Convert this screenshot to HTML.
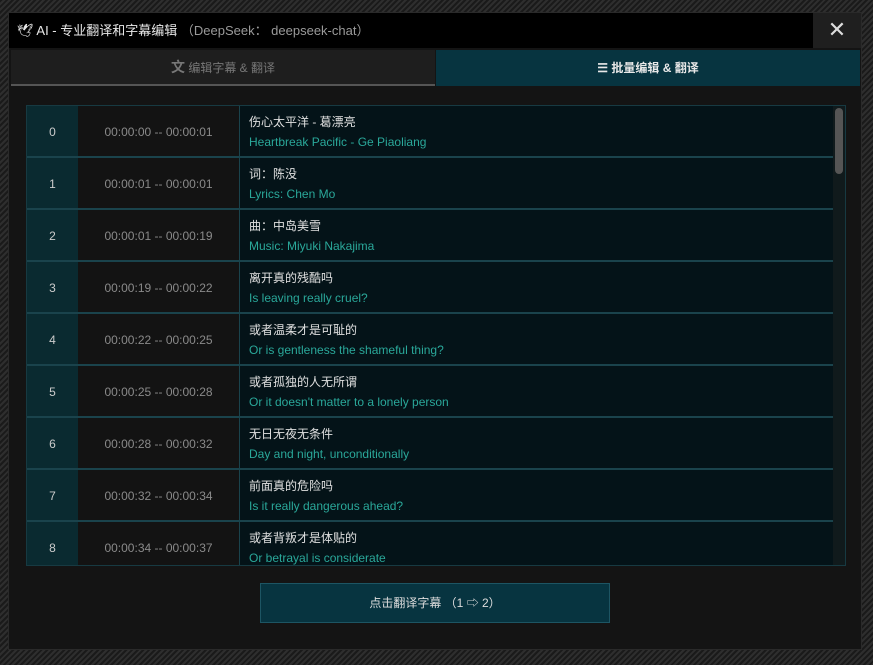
<!DOCTYPE html>
<html><head><meta charset="utf-8"><style>
*{margin:0;padding:0;box-sizing:border-box}
body{width:873px;height:665px;overflow:hidden;font-family:"Liberation Sans","Noto Sans CJK SC",sans-serif;
background:repeating-linear-gradient(135deg,#1a1a1a 0 2px,#2e2e2e 2px 4px);position:relative}
.dlg{position:absolute;left:8px;top:12px;width:854px;height:638px;background:#141414;border:1px solid #2a2a2a}
.title{position:absolute;left:0;top:0;width:852px;height:35px;background:#000;color:#e8e8e8;font-size:13px;line-height:35px;padding-left:8px}
.title .m{color:#9a9a9a}
.close{position:absolute;right:0;top:0;width:48px;height:35px;background:#1f1f1f;color:#ddd;font-size:22px;text-align:center;line-height:34px}
.tab1{position:absolute;left:2px;top:37px;width:424px;height:36px;background:#1e1e1e;border-bottom:2px solid #555;color:#777;font-size:12px;text-align:center;line-height:34px}
.tab2{position:absolute;left:427px;top:37px;width:424px;height:36px;background:#073440;color:#e8e8e8;font-size:12px;text-align:center;line-height:36px;font-weight:bold}
.tbl{position:absolute;left:17px;top:92px;width:820px;height:461px;border:1px solid #173a42;background:#041318;overflow:hidden}
.row{position:absolute;left:0;width:807px;height:52px;border-bottom:2px solid #1a434c}
.idx{position:absolute;left:0;top:0;width:51px;height:50px;background:#0a2a30;color:#ccc;font-size:12px;text-align:center;line-height:52px}
.tm{position:absolute;left:51px;top:0;width:162px;height:50px;background:#131313;color:#8a8a8a;font-size:12px;text-align:center;line-height:52px;border-right:1px solid #1a434c}
.tx{position:absolute;left:222px;top:6px;font-size:12px;line-height:20px}
.tx .a{color:#e0e0e0}.tx .b{color:#2aa89a}
.sb{position:absolute;right:0;top:0;width:12px;height:461px;background:#101a1c}
.sb i{position:absolute;left:2px;top:2px;width:8px;height:66px;background:#555;border-radius:4px}
.btn{position:absolute;left:251px;top:570px;width:350px;height:40px;background:#073440;border:1px solid #1d5563;color:#ddd;font-size:12px;text-align:center;line-height:38px}
</style></head><body>
<div class="dlg">
<div class="title">🕊 AI - 专业翻译和字幕编辑 <span class="m">（DeepSeek： deepseek-chat）</span></div>
<div class="close">✕</div>
<div class="tab1"><b style="font-size:14px">文</b> 编辑字幕 &amp; 翻译</div>
<div class="tab2">☰ 批量编辑 &amp; 翻译</div>
<div class="tbl">
<div class="row" style="top:0"><div class="idx">0</div><div class="tm">00:00:00 -- 00:00:01</div><div class="tx"><div class="a">伤心太平洋 - 葛漂亮</div><div class="b">Heartbreak Pacific - Ge Piaoliang</div></div></div>
<div class="row" style="top:52px"><div class="idx">1</div><div class="tm">00:00:01 -- 00:00:01</div><div class="tx"><div class="a">词：陈没</div><div class="b">Lyrics: Chen Mo</div></div></div>
<div class="row" style="top:104px"><div class="idx">2</div><div class="tm">00:00:01 -- 00:00:19</div><div class="tx"><div class="a">曲：中岛美雪</div><div class="b">Music: Miyuki Nakajima</div></div></div>
<div class="row" style="top:156px"><div class="idx">3</div><div class="tm">00:00:19 -- 00:00:22</div><div class="tx"><div class="a">离开真的残酷吗</div><div class="b">Is leaving really cruel?</div></div></div>
<div class="row" style="top:208px"><div class="idx">4</div><div class="tm">00:00:22 -- 00:00:25</div><div class="tx"><div class="a">或者温柔才是可耻的</div><div class="b">Or is gentleness the shameful thing?</div></div></div>
<div class="row" style="top:260px"><div class="idx">5</div><div class="tm">00:00:25 -- 00:00:28</div><div class="tx"><div class="a">或者孤独的人无所谓</div><div class="b">Or it doesn't matter to a lonely person</div></div></div>
<div class="row" style="top:312px"><div class="idx">6</div><div class="tm">00:00:28 -- 00:00:32</div><div class="tx"><div class="a">无日无夜无条件</div><div class="b">Day and night, unconditionally</div></div></div>
<div class="row" style="top:364px"><div class="idx">7</div><div class="tm">00:00:32 -- 00:00:34</div><div class="tx"><div class="a">前面真的危险吗</div><div class="b">Is it really dangerous ahead?</div></div></div>
<div class="row" style="top:416px"><div class="idx">8</div><div class="tm">00:00:34 -- 00:00:37</div><div class="tx"><div class="a">或者背叛才是体贴的</div><div class="b">Or betrayal is considerate</div></div></div>
<div class="sb"><i></i></div>
</div>
<div class="btn">点击翻译字幕 （1 ⇨ 2）</div>
</div>
</body></html>
